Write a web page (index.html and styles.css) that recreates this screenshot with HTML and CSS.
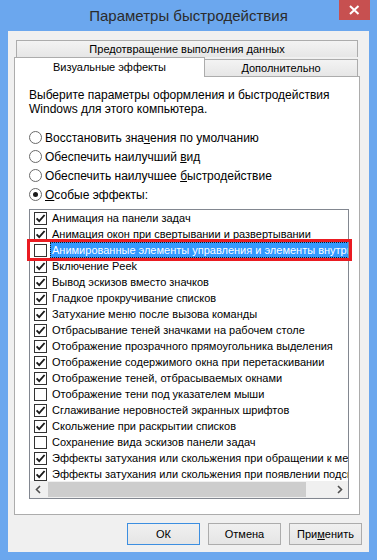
FILE: index.html
```html
<!DOCTYPE html>
<html lang="ru">
<head>
<meta charset="utf-8">
<title>Параметры быстродействия</title>
<link rel="stylesheet" href="styles.css">
</head>
<body>
<div class="window">
  <div class="titlebar">
    <span class="tb-left"></span>
    <div class="title">Параметры быстродействия</div>
    <div class="tb-right">
      <div class="close"><svg width="31" height="20" viewBox="0 0 31 20"><path d="M11 6 L19.5 14 M19.5 6 L11 14" stroke="#fff" stroke-width="2" fill="none"/></svg></div>
    </div>
  </div>
  <div class="client">
    <div class="tabrow first"><div class="tab wide">Предотвращение выполнения данных</div></div>
    <div class="tabrow second">
      <div class="tab active">Визуальные эффекты</div>
      <div class="tab other">Дополнительно</div>
    </div>
    <div class="panel">
      <p class="desc">Выберите параметры оформления и быстродействия<br>Windows для этого компьютера.</p>
      <div class="radios">
        <div class="radio"><span class="rbox"></span><span>Восстановить зна<u>ч</u>ения по умолчанию</span></div>
        <div class="radio"><span class="rbox"></span><span>Обеспечить наилучший <u>в</u>ид</span></div>
        <div class="radio"><span class="rbox"></span><span>Обеспечить наилучшее <u>б</u>ыстродействие</span></div>
        <div class="radio"><span class="rbox on"><span class="dot"></span></span><span><u>О</u>собые эффекты:</span></div>
      </div>
      <div class="listbox">
        <div class="rows">
          <div class="row"><span class="cb"><svg width="11" height="11" viewBox="0 0 11 11"><path d="M1.6 5.4 L4.2 8.2 L9.6 2" stroke="#1a1a1a" stroke-width="1.9" fill="none"/></svg></span><span class="lbl">Анимация на панели задач</span></div>
          <div class="row"><span class="cb"><svg width="11" height="11" viewBox="0 0 11 11"><path d="M1.6 5.4 L4.2 8.2 L9.6 2" stroke="#1a1a1a" stroke-width="1.9" fill="none"/></svg></span><span class="lbl">Анимация окон при свертывании и развертывании</span></div>
          <div class="row"><span class="cb"></span><span class="lbl sel">Анимированные элементы управления и элементы внутри окна</span></div>
          <div class="row"><span class="cb"><svg width="11" height="11" viewBox="0 0 11 11"><path d="M1.6 5.4 L4.2 8.2 L9.6 2" stroke="#1a1a1a" stroke-width="1.9" fill="none"/></svg></span><span class="lbl">Включение Peek</span></div>
          <div class="row"><span class="cb"><svg width="11" height="11" viewBox="0 0 11 11"><path d="M1.6 5.4 L4.2 8.2 L9.6 2" stroke="#1a1a1a" stroke-width="1.9" fill="none"/></svg></span><span class="lbl">Вывод эскизов вместо значков</span></div>
          <div class="row"><span class="cb"><svg width="11" height="11" viewBox="0 0 11 11"><path d="M1.6 5.4 L4.2 8.2 L9.6 2" stroke="#1a1a1a" stroke-width="1.9" fill="none"/></svg></span><span class="lbl">Гладкое прокручивание списков</span></div>
          <div class="row"><span class="cb"><svg width="11" height="11" viewBox="0 0 11 11"><path d="M1.6 5.4 L4.2 8.2 L9.6 2" stroke="#1a1a1a" stroke-width="1.9" fill="none"/></svg></span><span class="lbl">Затухание меню после вызова команды</span></div>
          <div class="row"><span class="cb"><svg width="11" height="11" viewBox="0 0 11 11"><path d="M1.6 5.4 L4.2 8.2 L9.6 2" stroke="#1a1a1a" stroke-width="1.9" fill="none"/></svg></span><span class="lbl">Отбрасывание теней значками на рабочем столе</span></div>
          <div class="row"><span class="cb"><svg width="11" height="11" viewBox="0 0 11 11"><path d="M1.6 5.4 L4.2 8.2 L9.6 2" stroke="#1a1a1a" stroke-width="1.9" fill="none"/></svg></span><span class="lbl">Отображение прозрачного прямоугольника выделения</span></div>
          <div class="row"><span class="cb"><svg width="11" height="11" viewBox="0 0 11 11"><path d="M1.6 5.4 L4.2 8.2 L9.6 2" stroke="#1a1a1a" stroke-width="1.9" fill="none"/></svg></span><span class="lbl">Отображение содержимого окна при перетаскивании</span></div>
          <div class="row"><span class="cb"><svg width="11" height="11" viewBox="0 0 11 11"><path d="M1.6 5.4 L4.2 8.2 L9.6 2" stroke="#1a1a1a" stroke-width="1.9" fill="none"/></svg></span><span class="lbl">Отображение теней, отбрасываемых окнами</span></div>
          <div class="row"><span class="cb"></span><span class="lbl">Отображение тени под указателем мыши</span></div>
          <div class="row"><span class="cb"><svg width="11" height="11" viewBox="0 0 11 11"><path d="M1.6 5.4 L4.2 8.2 L9.6 2" stroke="#1a1a1a" stroke-width="1.9" fill="none"/></svg></span><span class="lbl">Сглаживание неровностей экранных шрифтов</span></div>
          <div class="row"><span class="cb"><svg width="11" height="11" viewBox="0 0 11 11"><path d="M1.6 5.4 L4.2 8.2 L9.6 2" stroke="#1a1a1a" stroke-width="1.9" fill="none"/></svg></span><span class="lbl">Скольжение при раскрытии списков</span></div>
          <div class="row"><span class="cb"></span><span class="lbl">Сохранение вида эскизов панели задач</span></div>
          <div class="row"><span class="cb"><svg width="11" height="11" viewBox="0 0 11 11"><path d="M1.6 5.4 L4.2 8.2 L9.6 2" stroke="#1a1a1a" stroke-width="1.9" fill="none"/></svg></span><span class="lbl">Эффекты затухания или скольжения при обращении к меню</span></div>
          <div class="row"><span class="cb"><svg width="11" height="11" viewBox="0 0 11 11"><path d="M1.6 5.4 L4.2 8.2 L9.6 2" stroke="#1a1a1a" stroke-width="1.9" fill="none"/></svg></span><span class="lbl">Эффекты затухания или скольжения при появлении подсказок</span></div>
        </div>
        <div class="hscroll">
          <div class="sbtn"><svg width="17" height="17" viewBox="0 0 17 17"><path d="M10 5 L6.5 8.5 L10 12" stroke="#505050" stroke-width="1.6" fill="none"/></svg></div>
          <div class="track"><div class="thumb"></div></div>
          <div class="sbtn"><svg width="17" height="17" viewBox="0 0 17 17"><path d="M7 5 L10.5 8.5 L7 12" stroke="#505050" stroke-width="1.6" fill="none"/></svg></div>
        </div>
        <div class="annot"></div>
      </div>
    </div>
    <div class="buttons">
      <div class="btn default">ОК</div>
      <div class="btn">Отмена</div>
      <div class="btn">При<u>м</u>енить</div>
    </div>
  </div>
</div>
</body>
</html>
```

FILE: styles.css
```css
* { box-sizing: border-box; }
html, body { margin: 0; padding: 0; }
body {
  width: 377px;
  height: 560px;
  overflow: hidden;
  background: #6ba7ee;
  font-family: "Liberation Sans", Arial, sans-serif;
  font-size: 12px;
  color: #000;
}
.window {
  width: 377px;
  height: 560px;
  background: #6ba7ee;
  display: flex;
  flex-direction: column;
}
.titlebar {
  height: 31px;
  display: grid;
  grid-template-columns: 1fr auto 1fr;
}
.title {
  font-size: 15px;
  line-height: 32px;
  color: #2b2b2b;
  white-space: nowrap;
}
.tb-right {
  display: flex;
  justify-content: flex-end;
  align-items: flex-start;
}
.close {
  width: 31px;
  height: 20px;
  margin-right: 7px;
  background: #c75050;
  display: flex;
}
.client {
  margin: 0 8px;
  width: 361px;
  height: 521px;
  background: #f0f0f0;
  padding: 9px 9px 0 6px;
  display: flex;
  flex-direction: column;
}
.tabrow { display: flex; }
.tabrow.first { margin: 0 2px; height: 17px; }
.tab {
  border: 1px solid #acacac;
  border-bottom: none;
  background: linear-gradient(#f3f3f3, #e6e6e6);
  text-align: center;
  white-space: nowrap;
  font-size: 11px;
}
.tab.wide { flex: 1; height: 17px; line-height: 17px; }
.tabrow.second { height: 20px; margin-bottom: -1px; align-items: flex-start; }
.tab.active {
  width: 191px;
  height: 20px;
  background: #fff;
  line-height: 18px;
  position: relative;
  z-index: 1;
}
.tab.other {
  width: 153px;
  height: 17px;
  margin-top: 2px;
  border-left: none;
  line-height: 17px;
}
.panel {
  height: 439px;
  background: #fff;
  border: 1px solid #acacac;
  padding: 11px 0 0 14px;
  display: flex;
  flex-direction: column;
}
.desc { margin: 0; line-height: 14px; }
.radios { margin-top: 12px; display: flex; flex-direction: column; }
.radio { height: 19px; display: flex; align-items: center; white-space: nowrap; }
.rbox {
  width: 13px; height: 13px;
  border: 1px solid #6a6a6a;
  border-radius: 50%;
  background: #fff;
  margin-right: 3px;
  display: flex;
  align-items: center;
  justify-content: center;
}
.dot { width: 5px; height: 5px; border-radius: 50%; background: #1a1a1a; }
.listbox {
  margin-top: 5px;
  width: 320px;
  height: 290px;
  border: 1px solid #828790;
  background: #fff;
  position: relative;
  display: flex;
  flex-direction: column;
}
.rows { height: 272px; overflow: hidden; }
.row {
  height: 16px;
  display: flex;
  align-items: center;
  padding-left: 4px;
  white-space: nowrap;
  font-size: 11px;
}
.cb {
  flex: none;
  width: 13px; height: 13px;
  border: 1px solid #333;
  background: #fff;
  margin-right: 3px;
  display: flex;
}
.lbl {
  height: 16px;
  line-height: 14px;
  padding: 0 1px;
  border: 1px dotted transparent;
}
.lbl.sel {
  background: #3399ff;
  color: #fff;
  border-color: #1a1a1a;
}
.hscroll {
  height: 17px;
  display: flex;
  background: #f0f0f0;
}
.sbtn { width: 17px; height: 17px; flex: none; display: flex; }
.track { flex: 1; padding: 1px 0 1px 1px; }
.thumb { width: 258px; height: 15px; background: #cdcdcd; }
.annot {
  position: absolute;
  left: -3px;
  top: 29px;
  width: 325px;
  height: 22px;
  border: 3px solid #ea1b22;
}
.buttons {
  margin-top: 8px;
  margin-right: -2px;
  display: flex;
  justify-content: flex-end;
  gap: 8px;
}
.btn {
  width: 73px;
  height: 22px;
  border: 1px solid #acacac;
  background: linear-gradient(#f0f0f0, #e5e5e5);
  text-align: center;
  line-height: 20px;
  font-size: 11px;
}
.btn.default { border-color: #3c8ee0; }
```
